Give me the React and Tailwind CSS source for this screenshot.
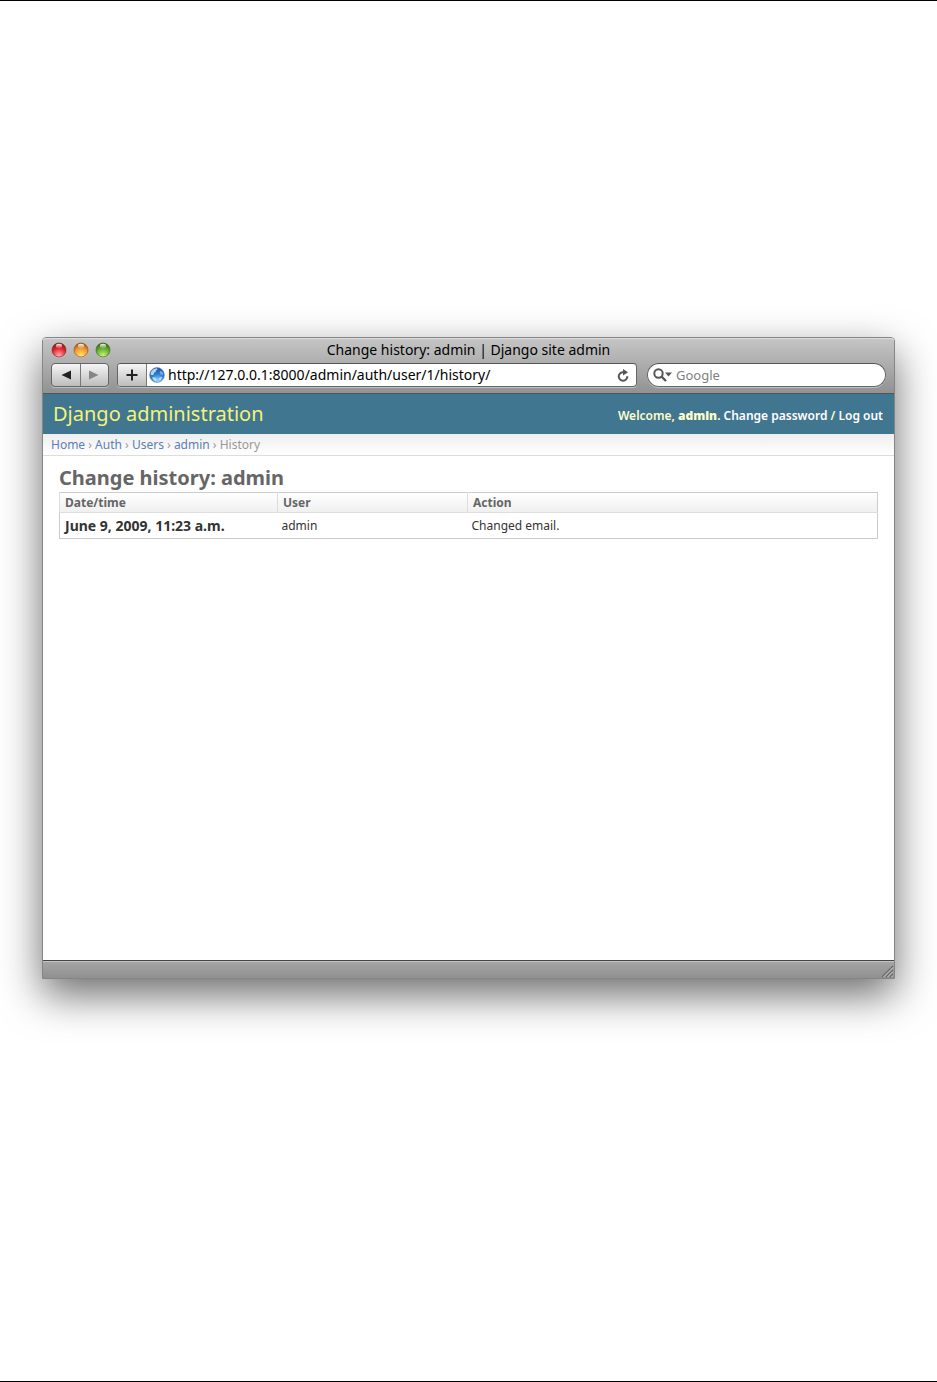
const crumbs = ["Home", "Auth", "Users", "admin"];

const columns = ["Date/time", "User", "Action"];

const entries = [
  { date: "June 9, 2009, 11:23 a.m.", user: "admin", action: "Changed email." },
];

const lights = [
  { name: "Close", rim: "#7d1416", base: "#e0222a", glow: "#ffb0b0" },
  { name: "Minimize", rim: "#8f4a12", base: "#f0952c", glow: "#ffe96e" },
  { name: "Zoom", rim: "#2f5c14", base: "#62aa2e", glow: "#c8f57e" },
];

function TrafficLight({ light }) {
  const id = `light-${light.name}`;
  return (
    <button aria-label={light.name} className="h-4 w-4">
      <svg viewBox="0 0 16 16" className="h-4 w-4">
        <defs>
          <radialGradient id={id} cx="50%" cy="90%" r="90%">
            <stop offset="0" stopColor={light.glow} />
            <stop offset="0.6" stopColor={light.base} />
            <stop offset="1" stopColor={light.rim} />
          </radialGradient>
          <linearGradient id={`${id}-shine`} x1="0" y1="0" x2="0" y2="1">
            <stop offset="0" stopColor="#fff" stopOpacity="0.95" />
            <stop offset="1" stopColor="#fff" stopOpacity="0.1" />
          </linearGradient>
        </defs>
        <circle cx="8" cy="8.6" r="7.2" fill="#fff" opacity="0.4" />
        <circle cx="8" cy="8" r="7" fill={`url(#${id})`} stroke={light.rim} strokeOpacity="0.7" strokeWidth="0.9" />
        <ellipse cx="8" cy="4" rx="3.2" ry="2.2" fill={`url(#${id}-shine)`} />
      </svg>
    </button>
  );
}

function Globe() {
  return (
    <svg viewBox="0 0 16 16" className="h-4 w-4 shrink-0" aria-hidden="true">
      <defs>
        <radialGradient id="globe" cx="55%" cy="90%" r="90%">
          <stop offset="0" stopColor="#9edcff" />
          <stop offset="0.5" stopColor="#2f7fd4" />
          <stop offset="1" stopColor="#1a4fa0" />
        </radialGradient>
      </defs>
      <circle cx="8" cy="8" r="7.4" fill="url(#globe)" stroke="#5f86b5" strokeWidth="0.6" />
      <path d="M1.8 5.6C3 3 5 1.600 7.800 1.300L8.600 2.400 7 3.400 6.600 5 5 5.800 4.800 7.400 3 8.200 1.500 7.600Z" fill="#cfe6fa" opacity="0.85" />
      <path d="M11 4l2 .4 1.200 2.200-.8 1.600-1.600-.6-1-1.600Z" fill="#8fc4f2" opacity="0.7" />
      <path d="M3.400 10l2.600.4 1.600 1.400-.6 2.200-1.600-.4-1.600-1.600Z" fill="#d8f0ff" opacity="0.75" />
      <path d="M10.600 10.400l2.600-.8-1 2.600-1.600 1.200-.8-1.600Z" fill="#d8f0ff" opacity="0.7" />
    </svg>
  );
}

function TitleBar() {
  return (
    <div className="relative flex h-[25px] justify-center pt-1">
      <div className="absolute left-2 top-1 flex gap-[6px]">
        {lights.map((light) => (
          <TrafficLight key={light.name} light={light} />
        ))}
      </div>
      <span className="text-[14px] leading-4 text-black">Change history: admin | Django site admin</span>
    </div>
  );
}

function Toolbar() {
  return (
    <div className="flex h-6 items-stretch px-2">
      {/* Back / forward */}
      <div className="flex w-[58px] rounded border border-[#666] bg-gradient-to-b from-[#f6f6f6] to-[#bdbdbd] shadow-[0_1px_0_rgba(255,255,255,0.4)]">
        <button aria-label="Back" className="flex flex-1 items-center justify-center border-r border-[#777]">
          <svg viewBox="0 0 10 10" className="h-[10px] w-[10px]"><path d="M10 .5v9L.5 5Z" fill="#222" /></svg>
        </button>
        <button aria-label="Forward" className="flex flex-1 items-center justify-center">
          <svg viewBox="0 0 10 10" className="h-[10px] w-[10px]"><path d="M0 .5v9L9.500 5Z" fill="#858585" /></svg>
        </button>
      </div>

      {/* Address bar */}
      <div className="ml-2 flex flex-1 rounded border border-[#666] border-t-[#555] bg-white shadow-[0_1px_0_rgba(255,255,255,0.4)]">
        <button aria-label="Add bookmark" className="flex w-[29px] items-center justify-center rounded-l-[3px] border-r border-[#777] bg-gradient-to-b from-[#f6f6f6] to-[#bdbdbd]">
          <svg viewBox="0 0 12 12" className="h-3 w-3"><path d="M6 .5v11M.5 6h11" stroke="#222" strokeWidth="2" /></svg>
        </button>
        <label className="flex min-w-0 flex-1 items-center gap-[3px] pl-[2px]">
          <Globe />
          <input
            aria-label="Address"
            defaultValue="http://127.0.0.1:8000/admin/auth/user/1/history/"
            className="h-5 min-w-0 flex-1 bg-transparent text-[14px] leading-5 text-black outline-none"
          />
        </label>
        <button aria-label="Reload" className="flex w-[27px] items-center justify-center">
          <svg viewBox="0 0 12 13" className="h-[13px] w-3">
            <path d="M10.300 7.200A4.300 4.300 0 1 1 6.500 3.200" fill="none" stroke="#555" strokeWidth="2" />
            <path d="M6 0l5 3.300L6 6.600Z" fill="#555" />
          </svg>
        </button>
      </div>

      {/* Search */}
      <label className="ml-[10px] flex w-[239px] items-center rounded-full border border-[#666] border-t-[#555] bg-white pl-[5px] shadow-[0_1px_0_rgba(255,255,255,0.4)]">
        <svg viewBox="0 0 19 14" className="h-[14px] w-[19px] shrink-0" aria-hidden="true">
          <circle cx="5.500" cy="5.500" r="4.200" fill="none" stroke="#555" strokeWidth="2" />
          <path d="M8.500 8.500l4.500 4.500" stroke="#555" strokeWidth="2.400" />
          <path d="M12 4.500h7l-3.500 4Z" fill="#555" />
        </svg>
        <input
          aria-label="Search"
          placeholder="Google"
          className="ml-1 h-5 min-w-0 flex-1 bg-transparent text-[13px] leading-5 outline-none placeholder:text-[#808080]"
        />
      </label>
    </div>
  );
}

function AdminHeader() {
  return (
    <header className="flex h-10 items-center justify-between bg-[#417690] pl-[10px] pr-[11px]">
      <h1 className="text-[20px] leading-6 text-[#f4f379]">Django administration</h1>
      <div className="mt-1 text-[12px] font-semibold leading-4 text-[#ffffcc]">
        Welcome, <strong>admin</strong>.{" "}
        <a href="#password" className="text-white">Change password</a> /{" "}
        <a href="#logout" className="text-white">Log out</a>
      </div>
    </header>
  );
}

function Breadcrumbs() {
  return (
    <nav className="h-[22px] border-b border-[#ddd] bg-gradient-to-b from-[#eee] to-white px-2 text-[12px] leading-[22px] text-[#999]">
      {crumbs.map((crumb) => (
        <span key={crumb}>
          <a href={`#${crumb}`} className="text-[#5b80b2]">{crumb}</a> ›{" "}
        </span>
      ))}
      History
    </nav>
  );
}

function HistoryTable() {
  return (
    <table className="w-full table-fixed border-collapse border border-[#ccc] text-left text-[12px] leading-4">
      <colgroup>
        <col className="w-[218px]" />
        <col className="w-[190px]" />
        <col />
      </colgroup>
      <thead>
        <tr className="h-5 bg-gradient-to-b from-white to-[#efefef]">
          {columns.map((column) => (
            <th key={column} className="border-b border-l border-[#ddd] px-[5px] font-bold text-[#666]">{column}</th>
          ))}
        </tr>
      </thead>
      <tbody>
        {entries.map((entry) => (
          <tr key={entry.date} className="h-[26px] text-[#333]">
            <th className="px-[5px] text-[14px] font-bold leading-4">{entry.date}</th>
            <td className="px-1">{entry.user}</td>
            <td className="px-1">{entry.action}</td>
          </tr>
        ))}
      </tbody>
    </table>
  );
}

function StatusBar() {
  return (
    <footer className="flex h-[18px] items-end justify-end border-t border-[#444] bg-gradient-to-b from-[#a6a6a6] to-[#909090] shadow-[inset_0_1px_0_#c4c4c4]">
      <svg viewBox="0 0 14 14" className="h-[14px] w-[14px]" aria-hidden="true">
        <path d="M2 13L13 2M6 13l7-7M10 13l3-3" stroke="#666" strokeWidth="1.200" />
        <path d="M3.500 13L13 3.500M7.500 13L13 7.500M11.500 13l1.500-1.500" stroke="#ccc" strokeWidth="0.900" />
      </svg>
    </footer>
  );
}

export default function App() {
  return (
    <div className="flex min-h-screen flex-col overflow-hidden border-y border-black bg-white px-[42px] pt-[336px] pb-[402px] font-['Lucida_Grande','Noto_Sans',sans-serif]">
      <div className="flex flex-1 flex-col rounded-t border border-[#858585] bg-white shadow-[0_16px_42px_rgba(0,0,0,0.58)]">
        <div className="h-14 shrink-0 rounded-t-[3px] border-b border-[#555] bg-gradient-to-b from-[#c6c6c6] to-[#929292] shadow-[inset_0_1px_0_#ddd]">
          <TitleBar />
          <Toolbar />
        </div>
        <AdminHeader />
        <Breadcrumbs />
        <main className="flex-1 px-4 pt-[10px]">
          <h2 className="mb-[2px] text-[20px] font-bold leading-6 text-[#666]">Change history: admin</h2>
          <HistoryTable />
        </main>
        <StatusBar />
      </div>
    </div>
  );
}
